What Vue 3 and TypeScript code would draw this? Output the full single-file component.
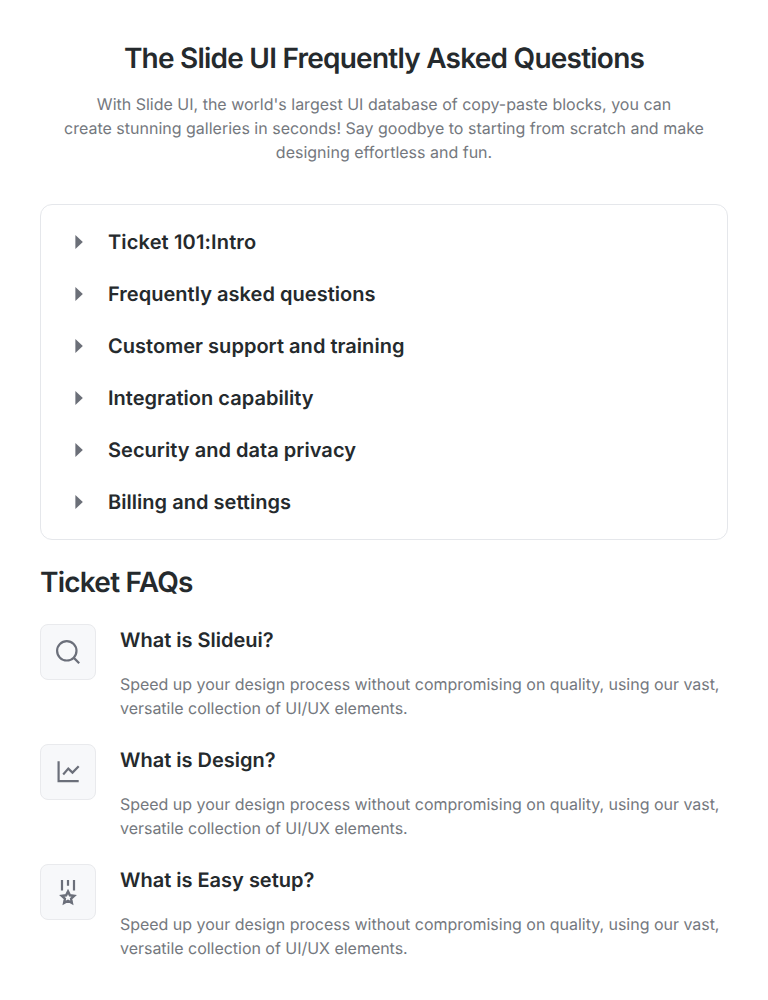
<script setup lang="ts">
const topics: string[] = [
  'Ticket 101:Intro',
  'Frequently asked questions',
  'Customer support and training',
  'Integration capability',
  'Security and data privacy',
  'Billing and settings',
]

interface Faq {
  icon: 'search' | 'chart' | 'medal'
  title: string
}

const faqs: Faq[] = [
  { icon: 'search', title: 'What is Slideui?' },
  { icon: 'chart', title: 'What is Design?' },
  { icon: 'medal', title: 'What is Easy setup?' },
]
</script>

<template>
  <main class="page">
    <header class="intro">
      <h1>The Slide UI Frequently Asked Questions</h1>
      <p>
        With Slide UI, the world's largest UI database of copy-paste blocks, you can<br />
        create stunning galleries in seconds! Say goodbye to starting from scratch and make<br />
        designing effortless and fun.
      </p>
    </header>

    <ul class="topics">
      <li v-for="topic in topics" :key="topic">
        <svg class="caret" width="24" height="24" viewBox="0 0 24 24">
          <path d="M7.4 5v14l7.4-7z" />
        </svg>
        <span>{{ topic }}</span>
      </li>
    </ul>

    <h2>Ticket FAQs</h2>

    <section class="faqs">
      <article v-for="faq in faqs" :key="faq.title" class="faq">
        <div class="tile">
          <svg v-if="faq.icon === 'search'" width="32" height="32" viewBox="0 0 32 32">
            <circle cx="14.8" cy="14.8" r="9.7" />
            <path d="M21.6 21.6l5.6 5.6" />
          </svg>
          <svg v-else-if="faq.icon === 'chart'" width="32" height="32" viewBox="0 0 32 32">
            <path d="M6.6 5.3v19.9h20.1" />
            <path d="M11.2 18.4l5.1-5.8 4.2 4 6.2-6.4" />
          </svg>
          <svg v-else width="32" height="32" viewBox="0 0 32 32">
            <path d="M10 4v10.5M16 4v5.8M22 4v10.5" />
            <path
              class="star"
              d="M16 15.4L17.9 19.3 22.2 19.8 19.1 22.7 19.9 26.9 16 24.8 12.1 26.9 12.9 22.7 9.8 19.8 14.1 19.3z"
            />
          </svg>
        </div>
        <div class="copy">
          <h3>{{ faq.title }}</h3>
          <p>
            Speed up your design process without compromising on quality, using our vast,<br />
            versatile collection of UI/UX elements.
          </p>
        </div>
      </article>
    </section>
  </main>
</template>

<style>
body {
  background: #fff;
}
</style>

<style scoped>
.page {
  box-sizing: border-box;
  width: 768px;
  height: 1000px;
  padding: 40px;
  font-family: Inter, sans-serif;
  color: #252a2d;
  overflow: hidden;
  text-rendering: geometricPrecision;
}
h1, h2, h3, p, ul {
  margin: 0;
}
h1, h2 {
  font-size: 28px;
  line-height: 36px;
  font-weight: 600;
  letter-spacing: -0.77px;
}
.intro {
  text-align: center;
}
p {
  font-size: 16px;
  line-height: 24px;
  color: #74787e;
  white-space: nowrap;
}
.intro p {
  margin-top: 16px;
}
.topics {
  box-sizing: border-box;
  list-style: none;
  height: 336px;
  margin-top: 40px;
  padding: 23px 27px;
  border: 1px solid #e5e7eb;
  border-radius: 12px;
  display: flex;
  flex-direction: column;
  gap: 24px;
}
.topics li {
  display: flex;
  align-items: center;
  gap: 16px;
  height: 28px;
  font-size: 20px;
  font-weight: 600;
  letter-spacing: 0.03px;
}
.topics li:first-child {
  letter-spacing: 0.15px;
}
.caret {
  fill: #6b6f78;
}
h2 {
  margin-top: 24px;
}
.faqs {
  display: flex;
  flex-direction: column;
  gap: 24px;
  margin-top: 24px;
}
.faq {
  display: flex;
  gap: 24px;
  height: 96px;
}
.tile {
  box-sizing: border-box;
  width: 56px;
  height: 56px;
  flex: none;
  display: grid;
  place-items: center;
  background: #f7f8fa;
  border: 1px solid #e9eaed;
  border-radius: 8px;
}
.tile svg {
  fill: none;
  stroke: #6b6f7a;
  stroke-width: 2.2;
}
.tile .star {
  stroke-width: 2.4;
}
h3 {
  font-size: 20px;
  line-height: 32px;
  font-weight: 600;
}
.copy p {
  margin-top: 16px;
  letter-spacing: -0.025px;
}
</style>
